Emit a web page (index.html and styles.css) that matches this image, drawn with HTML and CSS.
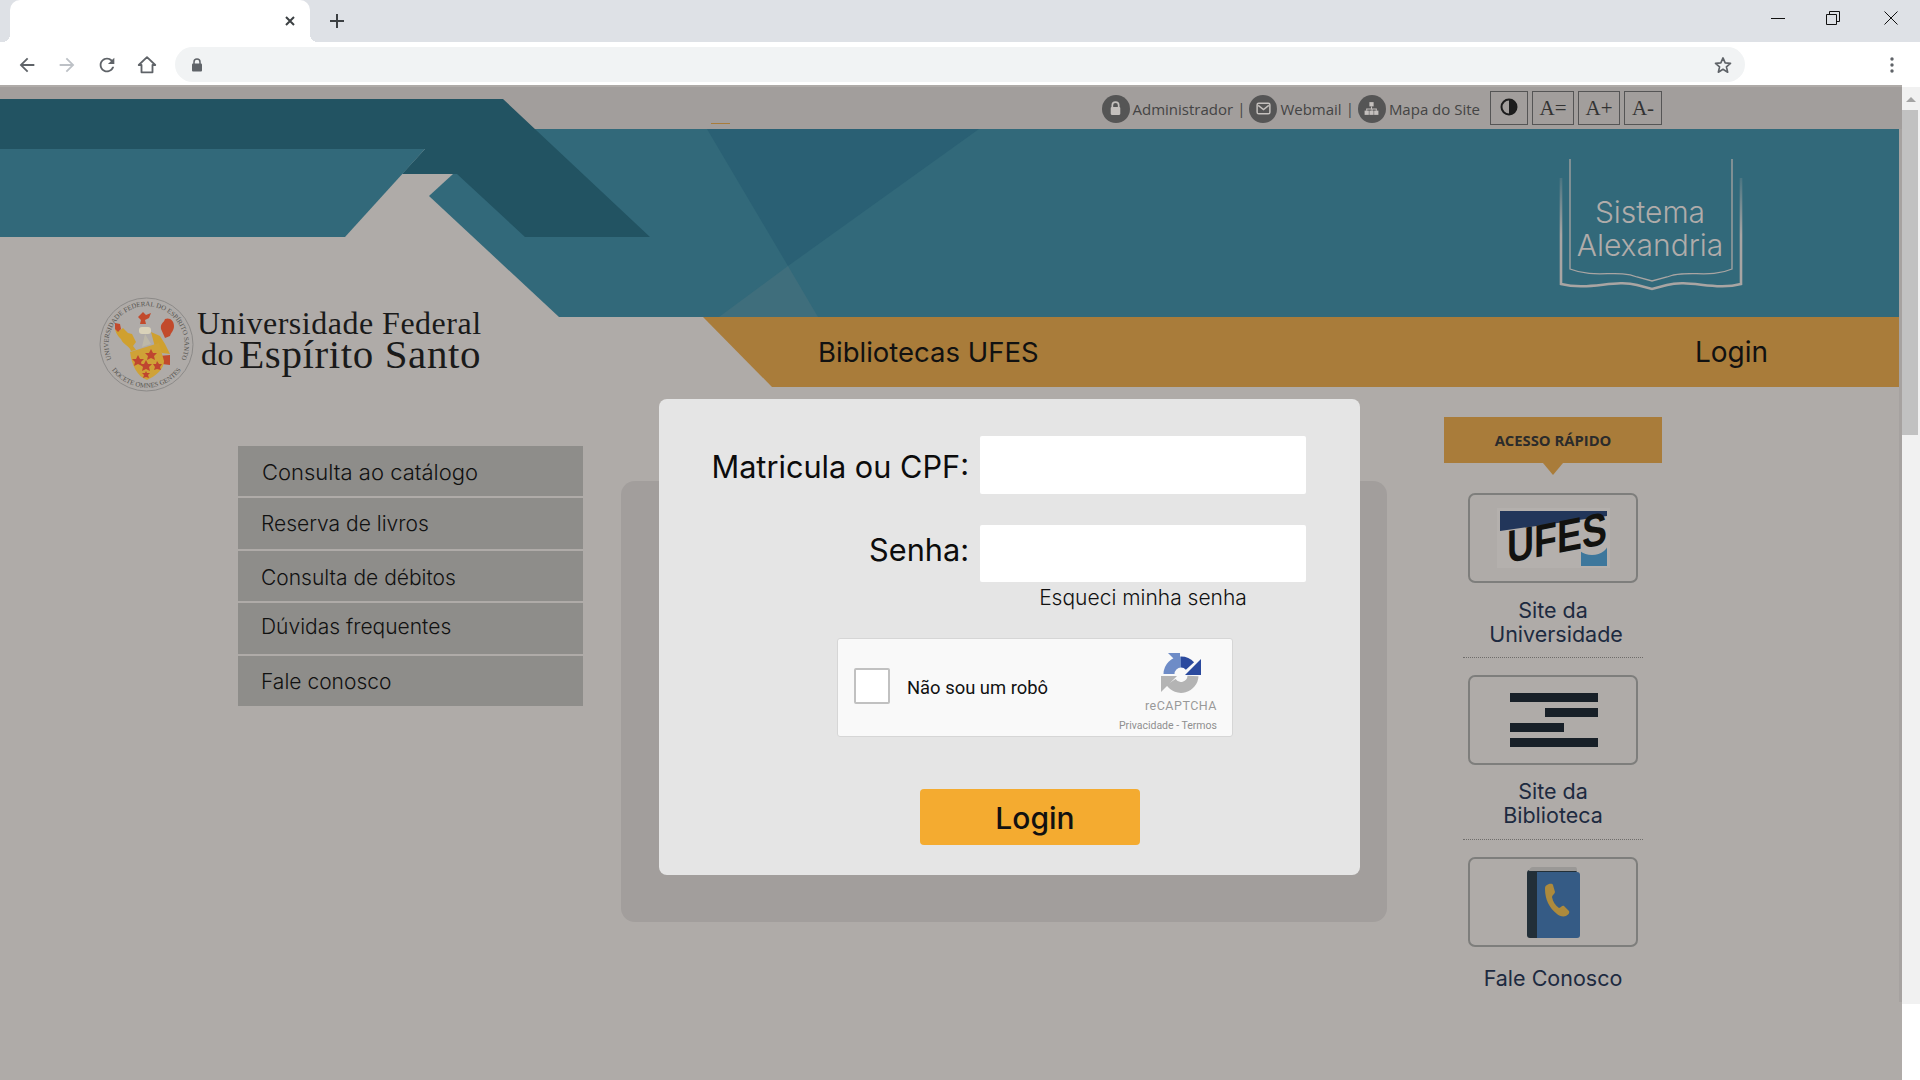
FILE: index.html
```html
<!DOCTYPE html>
<html lang="pt-BR">
  <head>
    <meta charset="UTF-8" />
    <meta name="viewport" content="width=device-width, initial-scale=1.0" />
    <title>Bibliotecas UFES - Login</title>
    <link rel="stylesheet" href="styles.css">
  </head>
  <body>
    <div class="tabstrip">
      <div class="tab">
        <svg class="tab-close" viewBox="0 0 12 12"><path d="M2 2l8 8M10 2l-8 8" /></svg>
      </div>
      <svg class="tab-new" viewBox="0 0 16 16"><path d="M8 1v14M1 8h14" /></svg>
      <div class="winbtns">
        <svg viewBox="0 0 14 14"><path d="M0 7.5h14" /></svg>
        <svg viewBox="0 0 14 14"><path d="M.5 3.5h10v10H.5zM3.5 3.5v-3h10v10h-3" /></svg>
        <svg class="win-close" viewBox="0 0 14 14"><path d="M.5.5l13 13M13.5.5l-13 13" /></svg>
      </div>
    </div>
    <div class="toolbar">
      <svg class="tool" viewBox="0 0 24 24"><path d="M20 11H7.83l5.59-5.59L12 4l-8 8 8 8 1.41-1.41L7.83 13H20v-2z" /></svg>
      <svg class="tool tool-off" viewBox="0 0 24 24"><path d="M4 11h12.17l-5.59-5.59L12 4l8 8-8 8-1.41-1.41L16.17 13H4v-2z" /></svg>
      <svg class="tool" viewBox="0 0 24 24"><path d="M17.65 6.35C16.2 4.9 14.21 4 12 4c-4.42 0-7.99 3.58-7.99 8s3.57 8 7.99 8c3.73 0 6.84-2.55 7.73-6h-2.08c-.82 2.33-3.04 4-5.65 4-3.31 0-6-2.69-6-6s2.69-6 6-6c1.66 0 3.14.69 4.22 1.78L13 11h7V4l-2.35 2.35z" /></svg>
      <svg class="tool" viewBox="0 0 24 24"><path d="M12 3.5L3 12h3v8h12v-8h3z" fill="none" stroke="#5f6368" stroke-width="2" stroke-linejoin="round" /></svg>
      <div class="omnibox">
        <svg class="omni-lock" viewBox="0 0 12 14"><path d="M3 6V4a3 3 0 0 1 6 0v2" fill="none" stroke="#5f6368" stroke-width="1.5" /><rect x="1" y="5.5" width="10" height="8" rx="1" /></svg>
        <svg class="omni-star" viewBox="0 0 24 24"><path d="M12 3.5l2.6 6 6.4.6-4.9 4.2 1.5 6.3-5.6-3.400-5.600 3.400 1.500-6.300L3 10.100l6.400-.6z" /></svg>
      </div>
      <svg class="tool-menu" viewBox="0 0 4 16"><circle cx="2" cy="2" r="1.700" /><circle cx="2" cy="8" r="1.700" /><circle cx="2" cy="14" r="1.700" /></svg>
    </div>

    <div class="viewport">
      <div class="page">
        <svg class="hero-art" viewBox="0 85 1902 302">
          <rect x="0" y="85" width="1902" height="2" fill="#afaba8" />
          <rect x="0" y="87" width="1902" height="42" fill="#a29e9c" />
          <rect x="711" y="123" width="19" height="1" fill="#a97c3a" />
          <polygon points="534,129 1902,129 1902,317 559,317 429,196 453,174" fill="#32697a" />
          <polygon points="707,129 979,129 788,266" fill="#2a6074" />
          <polygon points="788,266 719,317 818,317" fill="#3f6e7c" />
          <polygon points="0,99 503,99 650,237 525,237 457,174 402,174 425,149 0,149" fill="#225362" />
          <polygon points="0,149 425,149 345,237 0,237" fill="#32697a" />
        </svg>

        <div class="topbar">
          <a class="toplink">
            <span class="topicon"><svg viewBox="0 0 16 16"><path d="M5 7V5a3 3 0 0 1 6 0v2" fill="none" stroke="#c4c0bd" stroke-width="1.600" /><rect x="3.500" y="6.500" width="9" height="7.500" rx="1" fill="#c4c0bd" /></svg></span>
            Administrador
          </a>
          <span class="topsep">|</span>
          <a class="toplink">
            <span class="topicon"><svg viewBox="0 0 16 16"><rect x="2" y="3" width="12" height="10" rx="1.500" fill="none" stroke="#c4c0bd" stroke-width="1.400" /><path d="M3 5l5 4 5-4" fill="none" stroke="#c4c0bd" stroke-width="1.400" /></svg></span>
            Webmail
          </a>
          <span class="topsep">|</span>
          <a class="toplink">
            <span class="topicon"><svg viewBox="0 0 16 16" fill="#c4c0bd"><rect x="6" y="2" width="4" height="4" /><rect x="1.500" y="10" width="4" height="4" /><rect x="6" y="10" width="4" height="4" /><rect x="10.500" y="10" width="4" height="4" /><path d="M7.500 6h1v2h4.500v2h-1V9h-3v1h-1V9H4v1H3V8h4.500z" /></svg></span>
            Mapa do Site
          </a>
          <div class="fontbtns">
            <button class="fontbtn contrast"><svg viewBox="0 0 18 18"><circle cx="9" cy="9" r="7.500" fill="none" stroke="#1d1d1d" stroke-width="2" /><path d="M9 1.500a7.500 7.500 0 0 1 0 15z" fill="#1d1d1d" /></svg></button>
            <button class="fontbtn wide">A=</button>
            <button class="fontbtn wide">A+</button>
            <button class="fontbtn">A-</button>
          </div>
        </div>

        <div class="banner">
          <div class="alexandria">
            <svg class="alexandria-book" viewBox="0 0 190 140">
              <defs>
                <linearGradient id="bookFade" gradientUnits="userSpaceOnUse" x1="0" y1="23" x2="0" y2="80">
                  <stop offset="0" stop-color="#a9a5a3" stop-opacity=".2" />
                  <stop offset="1" stop-color="#a9a5a3" />
                </linearGradient>
              </defs>
              <path d="M15 4V114C40 124 62 114 82 122L97 126 112 122C132 114 154 124 177 114V4" fill="none" stroke="#a9a5a3" stroke-width="1.300" />
              <path d="M6 23V129C34 136 60 124 82 130L97 134 112 130C134 124 160 136 186 129V23" fill="none" stroke="url(#bookFade)" stroke-width="2.600" />
            </svg>
            <div class="alexandria-name">Sistema<br />Alexandria</div>
          </div>
        </div>

        <div class="brand-row">
          <div class="ufes-brand">
            <svg class="crest" viewBox="0 0 95 95">
              <defs>
                <path id="ringTop" d="M14.500 66A38 38 0 1 1 80.500 66" />
                <path id="ringBottom" d="M10.500 69.500A43 43 0 0 0 84.500 69.500" />
              </defs>
              <circle cx="47.500" cy="47.500" r="46.500" fill="none" stroke="#8c8a88" stroke-width="1" />
              <text class="crest-text"><textPath href="#ringTop" startOffset="50%" text-anchor="middle">UNIVERSIDADE FEDERAL DO ESPÍRITO SANTO</textPath></text>
              <text class="crest-text"><textPath href="#ringBottom" startOffset="50%" text-anchor="middle">DOCETE OMNES GENTES</textPath></text>
              <path d="M16 30l4 4 4-3 5 5 4 1 4 8-3 4 3 4-5 1c-2-6-8-6-10-12-2-2-6-6-6-12z" fill="#cfa02f" />
              <path d="M16 26l5 1 1 5-3 3-3-3z" fill="#c24a2c" />
              <path d="M62 32c-1-6 3-6 4-10 5-2 9 2 9 7 0 5-3 6-4 10l-5 2z" fill="#c24a2c" />
              <path d="M52 35l9 4 5 8 5 10-8-1-7-6z" fill="#cfa02f" />
              <path d="M60 59l11-1v10l-8-1z" fill="#c24a2c" />
              <path d="M39 20l5-5 3 3 5-2-2 5-4 2 1 4h-6l1-4z" fill="#c24a2c" />
              <rect x="40" y="30" width="12" height="7" rx="3" fill="#d9d2b9" />
              <path d="M46 37l6 10-9 3z" fill="#bdb8a8" />
              <path d="M31 55l29-9 5 18c0 8-8 15-17 19-10-4-15-14-17-28z" fill="#cfa237" />
              <g fill="#bf4630">
                <polygon points="39,58 41,62 45,62 42,65 43,69 39,67 35,69 36,65 33,62 37,62" />
                <polygon points="52,52 54,56 58,56 55,59 56,63 52,61 48,63 49,59 46,56 50,56" />
                <polygon points="47,63 49,67 53,67 50,70 51,74 47,72 43,74 44,70 41,67 45,67" />
                <polygon points="58,64 60,67 63,67 61,70 62,73 58,72 55,73 56,70 54,67 57,67" />
                <polygon points="47,74 48,76 51,76 49,78 50,81 47,80 44,81 45,78 43,76 46,76" />
              </g>
            </svg>
            <div class="ufes-name">
              <div class="ufes-line1">Universidade Federal</div>
              <div class="ufes-line2"><span class="ufes-do">do</span>Espírito Santo</div>
            </div>
          </div>
          <div class="goldbar">
            <span>Bibliotecas UFES</span>
            <span class="goldbar-login">Login</span>
          </div>
        </div>

        <div class="content">
          <ul class="sidemenu">
            <li class="menu-first">Consulta ao catálogo</li>
            <li>Reserva de livros</li>
            <li class="menu-third">Consulta de débitos</li>
            <li class="menu-fourth">Dúvidas frequentes</li>
            <li class="menu-fifth">Fale conosco</li>
          </ul>

          <div class="panel">
            <form class="login-card">
              <div class="login-grid">
                <label class="login-label login-label-user">Matricula ou CPF:</label>
                <input class="login-input" type="text" />
                <label class="login-label login-label-pass">Senha:</label>
                <input class="login-input login-input-pass" type="password" />
                <a class="forgot">Esqueci minha senha</a>
              </div>
              <div class="captcha">
                <div class="captcha-box"></div>
                <div class="captcha-text">Não sou um robô</div>
                <div class="captcha-brand">
                  <svg class="captcha-logo" viewBox="0 0 42 42">
                    <path d="M9 21a12 12 0 0 1 12-12" fill="none" stroke="#6e8cc7" stroke-width="11" />
                    <polygon points="8,0 20,0 20,12" fill="#6e8cc7" />
                    <path d="M21 9a12 12 0 0 1 9 4" fill="none" stroke="#2b4a9e" stroke-width="11" />
                    <polygon points="41,6 41,22 25,22" fill="#2b4a9e" />
                    <path d="M33 23a12 12 0 0 1-22 6" fill="none" stroke="#b4b4b4" stroke-width="11" />
                    <polygon points="1,23 17,23 1,39" fill="#b4b4b4" />
                  </svg>
                  <div class="captcha-name">reCAPTCHA</div>
                  <div class="captcha-links">Privacidade - Termos</div>
                </div>
              </div>
              <button class="login-btn" type="button">Login</button>
            </form>
          </div>

          <aside class="quick">
            <div class="quick-head">ACESSO RÁPIDO</div>
            <div class="quick-item">
              <div class="quick-box">
                <svg class="ufes-mark" viewBox="0 0 113 60">
                  <rect width="113" height="60" fill="#b4b0ad" />
                  <polygon points="3,3 110,3 110,8 3,23" fill="#22365a" />
                  <rect x="84" y="37" width="26" height="21" fill="#3d779c" />
                  <ellipse cx="95" cy="33" rx="17" ry="14" fill="#b4b0ad" />
                  <text class="ufes-mark-text" x="10" y="57" textLength="100" lengthAdjust="spacingAndGlyphs" transform="skewY(-11)">UFES</text>
                </svg>
              </div>
              <div class="quick-label">Site da<br /><span class="quick-label-shift">Universidade</span></div>
            </div>
            <div class="quick-item quick-bib">
              <div class="quick-box">
                <div class="bars">
                  <span class="bar bar-full"></span>
                  <span class="bar bar-right"></span>
                  <span class="bar bar-left"></span>
                  <span class="bar bar-full"></span>
                </div>
              </div>
              <div class="quick-label">Site da<br />Biblioteca</div>
            </div>
            <div class="quick-item quick-last">
              <div class="quick-box">
                <svg class="phonebook" viewBox="0 0 53 71">
                  <rect x="0" y="3" width="50" height="68" rx="3" fill="#222f38" />
                  <path d="M2 4c0-2 2-4 4-4h42c2 0 2 2 2 4z" fill="#9a9896" />
                  <path d="M10 5h40c2 0 3 1 3 3v60c0 2-1 3-3 3H10z" fill="#355b85" />
                  <path d="M20 18c2-1 5-2 6 0l2 7c0 2-3 3-3 5 1 5 3 8 7 11 2 0 3-3 5-2l5 5c1 2-1 4-3 5-3 1-7 0-9-2-8-6-12-15-12-25 0-2 0-3 2-4z" fill="#ad8a3c" />
                </svg>
              </div>
              <div class="quick-label">Fale Conosco</div>
            </div>
          </aside>
        </div>
      </div>

      <div class="scrollbar">
        <div class="scroll-track">
          <div class="scroll-up"></div>
          <div class="scroll-thumb"></div>
        </div>
      </div>
    </div>
  </body>
</html>
```

FILE: styles.css
```css
* {
  box-sizing: border-box;
}
body {
  margin: 0;
  width: 1920px;
  height: 1080px;
  overflow: hidden;
  background: #fff;
  font-family: Inter, "Liberation Sans", sans-serif;
}

/* browser chrome */
.tabstrip {
  display: flex;
  align-items: center;
  height: 42px;
  background: #dee1e6;
}
.tab {
  position: relative;
  display: flex;
  justify-content: flex-end;
  align-items: center;
  width: 300px;
  height: 42px;
  margin-left: 10px;
  padding-right: 14px;
  background: #fff;
  border-radius: 10px 10px 0 0;
}
.tab::before,
.tab::after {
  content: "";
  position: absolute;
  bottom: 0;
  width: 8px;
  height: 8px;
}
.tab::before {
  left: -8px;
  background: radial-gradient(circle at 0 0, transparent 8px, #fff 8px);
}
.tab::after {
  right: -8px;
  background: radial-gradient(circle at 100% 0, transparent 8px, #fff 8px);
}
.tab-close {
  width: 12px;
  height: 12px;
  fill: none;
  stroke: #3c4043;
  stroke-width: 2;
}
.tab-new {
  width: 16px;
  height: 16px;
  margin-left: 19px;
  fill: none;
  stroke: #3c4043;
  stroke-width: 2;
}
.winbtns {
  display: flex;
  gap: 41px;
  margin-left: auto;
  margin-right: 22px;
  margin-top: -6px;
}
.winbtns svg {
  width: 14px;
  height: 14px;
  fill: none;
  stroke: #111;
  stroke-width: 1;
}
.winbtns .win-close {
  margin-left: 3px;
}
.toolbar {
  display: flex;
  align-items: center;
  height: 43px;
  padding: 2px 0 0 16px;
  background: #fff;
}
.tool {
  width: 22px;
  height: 22px;
  margin-right: 18px;
  fill: #5f6368;
}
.tool-off {
  fill: #bdc1c6;
}
.omnibox {
  display: flex;
  align-items: center;
  justify-content: space-between;
  width: 1570px;
  height: 35px;
  margin-left: -1px;
  padding: 0 12px 0 16px;
  background: #f1f3f4;
  border-radius: 18px;
}
.omni-lock {
  width: 12px;
  height: 14px;
  fill: #5f6368;
}
.omni-star {
  width: 20px;
  height: 20px;
  fill: none;
  stroke: #5f6368;
  stroke-width: 2;
  stroke-linejoin: round;
}
.tool-menu {
  width: 4px;
  height: 16px;
  margin-left: 145px;
  fill: #5f6368;
}

/* page */
.viewport {
  display: flex;
  height: 995px;
}
.page {
  position: relative;
  width: 1902px;
  height: 995px;
  background: #afaba8;
  overflow: hidden;
}
.page::after {
  content: "";
  position: absolute;
  top: 44px;
  right: 0;
  width: 3px;
  height: 873px;
  background: #a6a2a0;
}
.hero-art {
  position: absolute;
  top: 0;
  left: 0;
  width: 1902px;
  height: 302px;
}
.topbar {
  position: relative;
  display: flex;
  justify-content: flex-end;
  align-items: center;
  height: 44px;
  padding: 6px 240px 4px 0;
  font-family: "Open Sans", sans-serif;
  font-size: 15px;
  color: #444;
}
.toplink {
  display: flex;
  align-items: center;
  gap: 3px;
  padding-top: 1px;
}
.topicon {
  display: flex;
  align-items: center;
  justify-content: center;
  width: 28px;
  height: 28px;
  background: #555;
  border-radius: 50%;
}
.topicon svg {
  width: 17px;
  height: 17px;
}
.topsep {
  margin: 0 4px;
}
.fontbtns {
  display: flex;
  gap: 4px;
  margin-left: 10px;
}
.fontbtn {
  display: flex;
  align-items: center;
  justify-content: center;
  width: 38px;
  height: 34px;
  padding: 0;
  background: transparent;
  border: 1px solid #555;
  font-family: "Liberation Serif", serif;
  font-size: 21px;
  color: #333;
}
.fontbtn.wide {
  width: 42px;
}
.contrast svg {
  width: 18px;
  height: 18px;
  margin-top: -3px;
}
.banner {
  position: relative;
  display: flex;
  justify-content: flex-end;
  height: 188px;
  padding: 26px 157px 0 0;
}
.alexandria {
  position: relative;
  width: 190px;
  height: 140px;
}
.alexandria-book {
  width: 190px;
  height: 140px;
}
.alexandria-name {
  position: absolute;
  top: 41px;
  left: 0;
  width: 100%;
  text-align: center;
  font-size: 30px;
  font-weight: 300;
  line-height: 33px;
  color: #b0acaa;
}
.brand-row {
  position: relative;
  display: flex;
  height: 70px;
}
.ufes-brand {
  display: flex;
  align-self: flex-start;
  width: 704px;
  flex: none;
  margin-top: -20px;
  padding-left: 99px;
}
.crest {
  width: 95px;
  height: 95px;
  flex: none;
}
.crest-text {
  font-family: "Liberation Serif", serif;
  font-size: 6.800px;
  fill: #55534f;
}
.ufes-name {
  margin: 9px 0 0 3px;
  font-family: "Liberation Serif", serif;
  color: #1a1a1a;
  white-space: nowrap;
}
.ufes-line1 {
  font-size: 32px;
  line-height: 34px;
  letter-spacing: .5px;
}
.ufes-line2 {
  margin-top: -7px;
  font-size: 41px;
  line-height: 42px;
  letter-spacing: .6px;
}
.ufes-do {
  font-size: 32px;
  margin-left: 4px;
  margin-right: 5px;
  vertical-align: 3px;
}
.goldbar {
  display: flex;
  justify-content: space-between;
  align-items: center;
  flex: 1;
  margin-left: -1px;
  padding: 0 134px 0 115px;
  background: #a97c3a;
  clip-path: polygon(0 0, 100% 0, 100% 100%, 69px 100%);
  font-size: 27.500px;
  font-weight: 400;
  color: #111;
}
.goldbar-login {
  font-size: 28px;
}

/* content */
.content {
  display: flex;
  align-items: flex-start;
  padding-left: 238px;
}
.sidemenu {
  width: 345px;
  margin: 59px 38px 0 0;
  padding: 0;
  list-style: none;
}
.sidemenu li {
  height: 51px;
  margin-bottom: 2px;
  padding: 13px 0 0 23px;
  background: #8e8d8a;
  font-size: 21px;
  font-weight: 300;
  line-height: 26px;
  color: #111;
}
.sidemenu .menu-first {
  height: 50px;
  padding-left: 24px;
  padding-top: 13px;
  font-size: 22px;
}
.sidemenu .menu-third {
  height: 50px;
  padding-top: 14px;
}
.sidemenu .menu-fourth {
  padding-top: 11px;
}
.sidemenu .menu-fifth {
  height: 50px;
  padding-top: 13px;
}
.panel {
  position: relative;
  width: 766px;
  height: 441px;
  margin: 94px 57px 0 0;
  background: #a29e9c;
  border-radius: 14px;
}
.login-card {
  position: absolute;
  top: -82px;
  left: 38px;
  width: 701px;
  height: 476px;
  padding-top: 37px;
  background: #e5e5e5;
  border-radius: 8px;
}
.login-grid {
  display: grid;
  grid-template-columns: 310px 326px;
  column-gap: 11px;
  row-gap: 31px;
  align-items: center;
}
.login-label {
  text-align: right;
  font-size: 30.700px;
  font-weight: 400;
  color: #0c0c0c;
}
.login-label-user {
  margin-top: 2px;
}
.login-label-pass {
  margin-bottom: 9px;
}
.login-input {
  height: 58px;
  padding: 0;
  background: #fff;
  border: 0;
  border-radius: 2px;
}
.login-input-pass {
  height: 57px;
}
.forgot {
  grid-column: 2;
  margin-top: -30px;
  text-align: center;
  font-size: 21px;
  font-weight: 300;
  line-height: 26px;
  color: #111;
}
.captcha {
  display: flex;
  align-items: center;
  width: 396px;
  height: 99px;
  margin: 25px 0 0 178px;
  padding-left: 16px;
  background: #f9f9f9;
  border: 1px solid #d6d6d6;
  border-radius: 3px;
}
.captcha-box {
  width: 36px;
  height: 36px;
  flex: none;
  margin-top: -4px;
  background: #fff;
  border: 2px solid #c1c1c1;
  border-radius: 2px;
}
.captcha-text {
  margin-left: 17px;
  font-family: Roboto, sans-serif;
  font-size: 18.400px;
  color: #111;
}
.captcha-brand {
  display: flex;
  flex-direction: column;
  align-items: flex-end;
  align-self: flex-start;
  margin-left: auto;
  padding: 14px 15px 0 0;
}
.captcha-logo {
  width: 42px;
  height: 42px;
  margin-right: 15px;
}
.captcha-name {
  margin-top: 3px;
  font-family: Roboto, sans-serif;
  font-size: 12.500px;
  letter-spacing: .5px;
  color: #999;
}
.captcha-links {
  margin-top: 6px;
  font-family: Roboto, sans-serif;
  font-size: 10.500px;
  color: #8f8f8f;
}
.login-btn {
  display: block;
  width: 220px;
  height: 56px;
  margin: 52px 0 0 261px;
  padding: 2px 0 0 10px;
  background: #f4ab30;
  border: 0;
  border-radius: 4px;
  font-family: Inter, sans-serif;
  font-size: 30px;
  font-weight: 500;
  color: #111;
}
.quick {
  position: relative;
  width: 218px;
  margin-top: 30px;
}
.quick-head {
  position: relative;
  height: 46px;
  margin-bottom: 30px;
  background: #a97c3a;
  text-align: center;
  font-family: "Open Sans", sans-serif;
  font-size: 14.800px;
  font-weight: 700;
  line-height: 47px;
  color: #2b2b2b;
}
.quick-head::after {
  content: "";
  position: absolute;
  top: 100%;
  left: 99px;
  border-style: solid;
  border-width: 12px 10px 0;
  border-color: #a97c3a transparent transparent;
}
.quick-item {
  width: 180px;
  margin: 0 auto 17px;
  padding-bottom: 11px;
  border-bottom: 1px dotted #6f6d6b;
}
.quick-last {
  border-bottom: 0;
}
.quick-box {
  display: flex;
  align-items: center;
  justify-content: center;
  width: 170px;
  height: 90px;
  margin: 0 auto 15px;
  border: 2px solid #7e7e7c;
  border-radius: 7px;
}
.quick-last .quick-box {
  margin-bottom: 19px;
}
.quick-label {
  text-align: center;
  white-space: nowrap;
  font-size: 21.500px;
  font-weight: 400;
  line-height: 24px;
  color: #1d2a40;
}
.quick-label-shift {
  display: inline-block;
  margin-left: 6px;
}
.quick-bib .quick-label {
  margin-top: -1px;
  margin-bottom: 1px;
}
.ufes-mark {
  width: 113px;
  height: 60px;
  overflow: visible;
}
.ufes-mark-text {
  font-family: "Liberation Sans", sans-serif;
  font-size: 46px;
  font-weight: 700;
  fill: #12120f;
}
.bars {
  display: flex;
  flex-direction: column;
  gap: 6px;
  width: 88px;
  margin-left: 2px;
}
.bar {
  height: 9px;
  background: #182028;
}
.bar-full {
  width: 88px;
}
.bar-right {
  width: 53px;
  margin-left: 35px;
}
.bar-left {
  width: 54px;
}
.phonebook {
  width: 53px;
  height: 71px;
}

/* scrollbar */
.scrollbar {
  width: 18px;
  height: 995px;
  background: #fff;
}
.scroll-track {
  height: 917px;
  margin-top: 2px;
  background: #f1f1f1;
}
.scroll-up {
  width: 0;
  margin: 0 auto;
  position: relative;
  top: 10px;
  border-style: solid;
  border-width: 0 5px 5px;
  border-color: transparent transparent #a3a3a3;
}
.scroll-thumb {
  width: 16px;
  height: 325px;
  margin-top: 18px;
  background: #c1c1c1;
}
```
